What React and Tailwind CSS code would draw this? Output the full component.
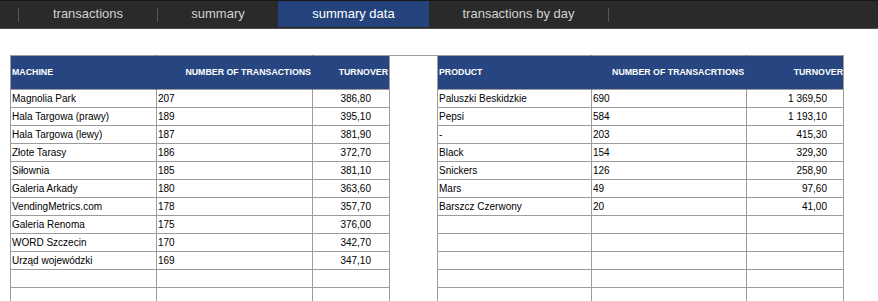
const machines = [
  ["Magnolia Park", "207", "386,80"],
  ["Hala Targowa (prawy)", "189", "395,10"],
  ["Hala Targowa (lewy)", "187", "381,90"],
  ["Złote Tarasy", "186", "372,70"],
  ["Siłownia", "185", "381,10"],
  ["Galeria Arkady", "180", "363,60"],
  ["VendingMetrics.com", "178", "357,70"],
  ["Galeria Renoma", "175", "376,00"],
  ["WORD Szczecin", "170", "342,70"],
  ["Urząd wojewódzki", "169", "347,10"],
];

const products = [
  ["Paluszki Beskidzkie", "690", "1 369,50"],
  ["Pepsi", "584", "1 193,10"],
  ["-", "203", "415,30"],
  ["Black", "154", "329,30"],
  ["Snickers", "126", "258,90"],
  ["Mars", "49", "97,60"],
  ["Barszcz Czerwony", "20", "41,00"],
];

const tabs = [
  { label: "transactions", w: "w-[138px]", sepAfter: true },
  { label: "summary", w: "w-[120px]", sepAfter: false },
  { label: "summary data", w: "w-[151px]", active: true, sepAfter: false },
  { label: "transactions by day", w: "w-[179px]", sepAfter: true },
];

function Sep() {
  return <div className="h-[14px] w-px bg-[#575757] self-center" />;
}

export default function App() {
  const rows = Array.from({ length: 12 }, (_, i) => i);
  const line = "border-[#9c9c9c]";
  const head = "flex h-[35px] items-center border-t border-b border-[#9c9c9c] bg-[#274580] text-[8.8px] font-bold text-white";
  return (
    <div
      className="h-[301px] w-[878px] overflow-hidden bg-white"
      style={{ fontFamily: '"Liberation Sans", Arial, sans-serif' }}
    >
      <div className="flex h-[29px] border-t border-b border-t-[#181818] border-b-[#4e4e4e] bg-[#2a2a2a]">
        <div className="w-[18px]" />
        <Sep />
        {tabs.map((t) => (
          <div key={t.label} className="flex items-start">
            <div
              className={`${t.w} flex h-[26px] items-center justify-center text-[13px] ${
                t.active ? "bg-[#24437c] text-white" : "text-[#d2d2d2]"
              }`}
            >
              {t.label}
            </div>
            {t.sepAfter && (
              <div className="flex h-[27px] items-center">
                <Sep />
              </div>
            )}
          </div>
        ))}
      </div>

      <div className="ml-[10px] mt-[26px] grid grid-cols-[147px_156px_77px_47px_155px_155px_97px] text-[10px] text-black">
        {/* header */}
        <div className={`${head} border-l border-r border-r-[#274580] pl-[1px]`}>MACHINE</div>
        <div className={`${head} justify-end border-r border-r-[#274580] pr-[1px]`}>NUMBER OF TRANSACTIONS</div>
        <div className={`${head} justify-end border-r border-r-[#9c9c9c] pr-[1px]`}>TURNOVER</div>
        <div className={`h-[35px] border-t ${line}`} />
        <div className={`${head} border-l border-r border-r-[#274580] pl-[1px]`}>PRODUCT</div>
        <div className={`${head} justify-end border-r border-r-[#274580] pr-[2px]`}>NUMBER OF TRANSACRTIONS</div>
        <div className={`${head} justify-end border-r border-r-[#9c9c9c] pr-0`}>TURNOVER</div>

        {rows.map((i) => {
          const m = machines[i] || ["", "", ""];
          const p = products[i] || ["", "", ""];
          return [
            <div key={`a${i}`} className={`flex h-[18px] items-center border-l border-r border-b ${line} pl-[1px]`}>
              {m[0]}
            </div>,
            <div key={`b${i}`} className={`flex h-[18px] items-center border-r border-b ${line} pl-[1px]`}>
              {m[1]}
            </div>,
            <div key={`c${i}`} className={`flex h-[18px] items-center justify-end border-r border-b ${line} pr-[18px]`}>
              {m[2]}
            </div>,
            <div key={`g${i}`} className="h-[18px]" />,
            <div key={`d${i}`} className={`flex h-[18px] items-center border-l border-r border-b ${line} pl-[1px]`}>
              {p[0]}
            </div>,
            <div key={`e${i}`} className={`flex h-[18px] items-center border-r border-b ${line} pl-[1px]`}>
              {p[1]}
            </div>,
            <div key={`f${i}`} className={`flex h-[18px] items-center justify-end border-r border-b ${line} pr-[16px]`}>
              {p[2]}
            </div>,
          ];
        })}
      </div>
    </div>
  );
}
